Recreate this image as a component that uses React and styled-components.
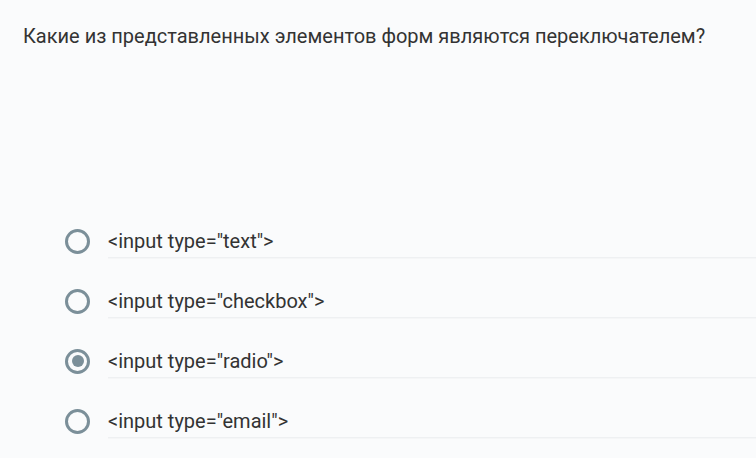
import React, { useState } from "react";
import styled, { createGlobalStyle } from "styled-components";

const GlobalStyle = createGlobalStyle`
	html, body {
		margin: 0;
		padding: 0;
		background: #fafbfc;
	}
	body {
		font-family: Roboto, "Liberation Sans", sans-serif;
		color: #333;
	}
`;

const Page = styled.div`
	width: 756px;
	height: 458px;
	overflow: hidden;
	box-sizing: border-box;
	padding: 24px 0 0 23px;
`;

const Question = styled.h2`
	margin: 0;
	font-size: 20px;
	font-weight: 400;
	line-height: 24px;
	color: #333;
`;

const Options = styled.div`
	display: flex;
	flex-direction: column;
	margin-top: 163px;
	margin-left: 42px;
`;

const Option = styled.label`
	display: flex;
	align-items: center;
	height: 60px;
	cursor: pointer;
`;

const Radio = styled.span`
	flex-shrink: 0;
	width: 25px;
	height: 25px;
	box-sizing: border-box;
	border: 3px solid #7b8f99;
	border-radius: 50%;
	display: flex;
	align-items: center;
	justify-content: center;

	&::after {
		content: "";
		width: 12px;
		height: 12px;
		border-radius: 50%;
		background: #7b8f99;
		display: ${(p) => (p.$checked ? "block" : "none")};
	}
`;

const OptionText = styled.span`
	flex: 1;
	margin-left: 18px;
	padding: 4px 0 4px;
	font-size: 20px;
	line-height: 24px;
	color: #333;
	border-bottom: 1px solid #eef0f2;
	box-shadow: 0 1px 0 #f5f6f7;
`;

const options = [
	'<input type="text">',
	'<input type="checkbox">',
	'<input type="radio">',
	'<input type="email">',
];

export default function App() {
	const [selected, setSelected] = useState(2);

	return (
		<Page>
			<GlobalStyle />
			<Question>Какие из представленных элементов форм являются переключателем?</Question>
			<Options>
				{options.map((text, i) => (
					<Option key={text} onClick={() => setSelected(i)}>
						<Radio $checked={selected === i} />
						<OptionText>{text}</OptionText>
					</Option>
				))}
			</Options>
		</Page>
	);
}
